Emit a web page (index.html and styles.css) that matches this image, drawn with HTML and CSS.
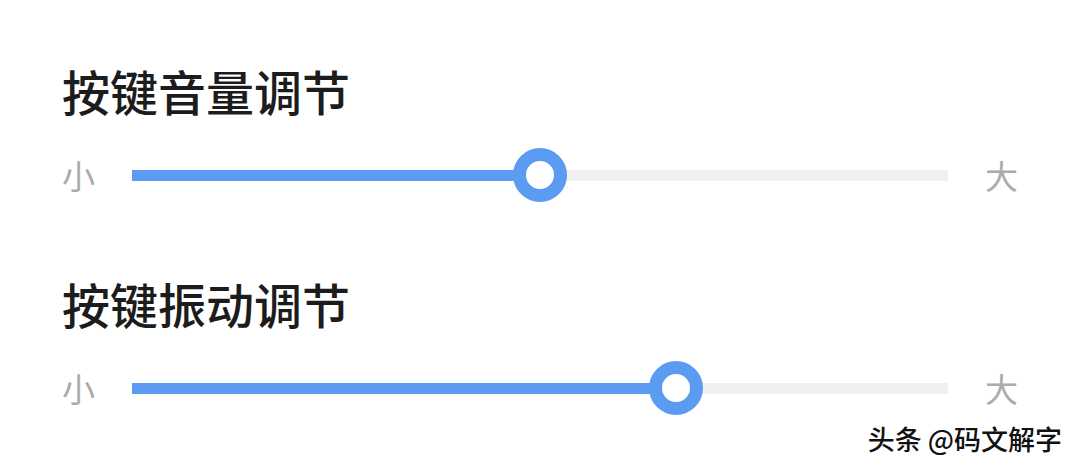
FILE: index.html
```html
<!DOCTYPE html>
<html lang="zh">
<head>
<meta charset="utf-8">
<link rel="stylesheet" href="styles.css">
</head>
<body>
<div class="page">
  <section class="group first">
    <h2 class="title">按键音量调节</h2>
    <div class="row">
      <span class="end">小</span>
      <div class="track">
        <div class="fill" style="width:50%"></div>
        <div class="thumb" style="left:50%"></div>
      </div>
      <span class="end big">大</span>
    </div>
  </section>
  <section class="group second">
    <h2 class="title">按键振动调节</h2>
    <div class="row">
      <span class="end">小</span>
      <div class="track">
        <div class="fill" style="width:66.7%"></div>
        <div class="thumb" style="left:66.7%"></div>
      </div>
      <span class="end big">大</span>
    </div>
  </section>
  <div class="watermark">头条 @码文解字</div>
</div>
</body>
</html>
```
FILE: styles.css
```css
html, body {
  margin: 0;
  padding: 0;
  background: #ffffff;
}
body {
  font-family: "Noto Sans CJK SC", "Noto Sans", sans-serif;
}
.page {
  position: relative;
  width: 1080px;
  height: 470px;
  padding-left: 62px;
  box-sizing: border-box;
  overflow: hidden;
}
.group.first {
  padding-top: 62px;
}
.group.second {
  padding-top: 73px;
}
.title {
  margin: 0;
  font-size: 48px;
  line-height: 56px;
  font-weight: 500;
  color: #1c1c1c;
}
.row {
  display: flex;
  align-items: center;
  height: 54px;
  margin-top: 30px;
}
.end {
  width: 70px;
  font-size: 33px;
  line-height: 40px;
  color: #ababab;
}
.end.big {
  width: auto;
  margin-left: 37px;
}
.track {
  position: relative;
  width: 816px;
  height: 11px;
  background: #efefef;
}
.fill {
  height: 100%;
  background: #5b9cf2;
}
.thumb {
  position: absolute;
  top: 50%;
  width: 28px;
  height: 28px;
  border: 13px solid #5b9cf2;
  border-radius: 50%;
  background: #ffffff;
  transform: translate(-50%, -50%);
}
.watermark {
  position: absolute;
  right: 18px;
  bottom: 14px;
  font-size: 27px;
  line-height: 34px;
  font-weight: 500;
  color: #111111;
  text-shadow: 1px 1px 0 #ffffff, -1px -1px 0 #ffffff;
}
```
